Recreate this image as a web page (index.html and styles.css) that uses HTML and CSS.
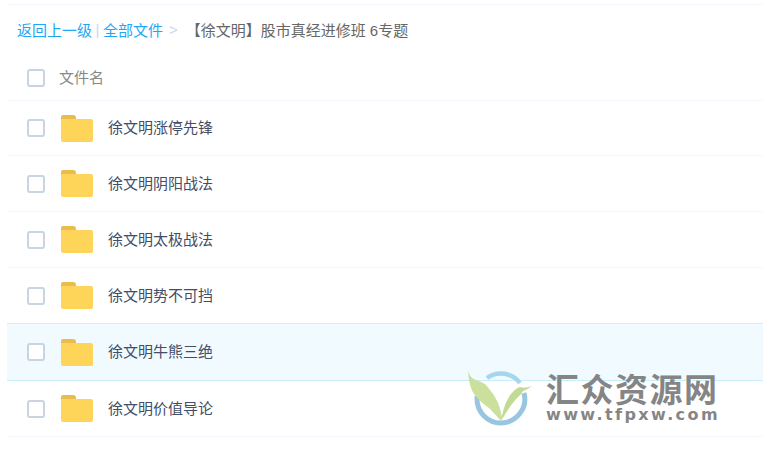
FILE: index.html
```html
<!DOCTYPE html>
<html lang="zh-CN">
<head>
    <meta charset="UTF-8">
    <title>全部文件</title>
    <link rel="stylesheet" href="styles.css">
</head>
<body>
    <div class="container">
        <div class="crumbs">
            <a class="crumb-link">返回上一级</a>
            <span class="crumb-bar">|</span>
            <a class="crumb-link">全部文件</a>
            <span class="crumb-arrow">&gt;</span>
            <span class="crumb-current">【徐文明】股市真经进修班 6专题</span>
        </div>

        <div class="list-head">
            <span class="check"></span>
            <span class="head-name">文件名</span>
        </div>

        <div class="file-row">
            <span class="check"></span>
            <svg class="folder" viewBox="0 0 32 27"><path class="folder-tab" d="M0 2a2 2 0 0 1 2-2h10a3 3 0 0 1 3 3v3H0z"/><path class="folder-body" d="M0 4h30a2 2 0 0 1 2 2v19a2 2 0 0 1-2 2H2a2 2 0 0 1-2-2z"/></svg>
            <span class="file-name">徐文明涨停先锋</span>
        </div>
        <div class="file-row">
            <span class="check"></span>
            <svg class="folder" viewBox="0 0 32 27"><path class="folder-tab" d="M0 2a2 2 0 0 1 2-2h10a3 3 0 0 1 3 3v3H0z"/><path class="folder-body" d="M0 4h30a2 2 0 0 1 2 2v19a2 2 0 0 1-2 2H2a2 2 0 0 1-2-2z"/></svg>
            <span class="file-name">徐文明阴阳战法</span>
        </div>
        <div class="file-row">
            <span class="check"></span>
            <svg class="folder" viewBox="0 0 32 27"><path class="folder-tab" d="M0 2a2 2 0 0 1 2-2h10a3 3 0 0 1 3 3v3H0z"/><path class="folder-body" d="M0 4h30a2 2 0 0 1 2 2v19a2 2 0 0 1-2 2H2a2 2 0 0 1-2-2z"/></svg>
            <span class="file-name">徐文明太极战法</span>
        </div>
        <div class="file-row">
            <span class="check"></span>
            <svg class="folder" viewBox="0 0 32 27"><path class="folder-tab" d="M0 2a2 2 0 0 1 2-2h10a3 3 0 0 1 3 3v3H0z"/><path class="folder-body" d="M0 4h30a2 2 0 0 1 2 2v19a2 2 0 0 1-2 2H2a2 2 0 0 1-2-2z"/></svg>
            <span class="file-name">徐文明势不可挡</span>
        </div>
        <div class="file-row hover">
            <span class="check"></span>
            <svg class="folder" viewBox="0 0 32 27"><path class="folder-tab" d="M0 2a2 2 0 0 1 2-2h10a3 3 0 0 1 3 3v3H0z"/><path class="folder-body" d="M0 4h30a2 2 0 0 1 2 2v19a2 2 0 0 1-2 2H2a2 2 0 0 1-2-2z"/></svg>
            <span class="file-name">徐文明牛熊三绝</span>
        </div>
        <div class="file-row">
            <span class="check"></span>
            <svg class="folder" viewBox="0 0 32 27"><path class="folder-tab" d="M0 2a2 2 0 0 1 2-2h10a3 3 0 0 1 3 3v3H0z"/><path class="folder-body" d="M0 4h30a2 2 0 0 1 2 2v19a2 2 0 0 1-2 2H2a2 2 0 0 1-2-2z"/></svg>
            <span class="file-name">徐文明价值导论</span>
        </div>
    </div>

    <!-- watermark over the list -->
    <div class="watermark">
        <svg class="wm-logo" viewBox="0 0 66 56">
            <path d="M20 7a24 24 0 0 1 33 5" fill="none" stroke="#a3d5ea" stroke-width="4.5"/>
            <path d="M57 22a24 24 0 0 1-23 30a24 24 0 0 1-24-24q0-2 0-3" fill="none" stroke="#93c4df" stroke-width="5"/>
            <path d="M1 0q2 7 8 9q9 2 14 10q9 10 12 27q-1 2-1 4q-5-6-12-13q-10-7-15-14q-5-7-6-23z" fill="#c9df97"/>
            <path d="M34 50q1-6 2-9q2-10 8-18q5-6 9-7q5 2 12-1q-5 4-9 5q-1 3-5 6q-3 3-6 7q-5 7-11 17z" fill="#bfda8d"/>
        </svg>
        <div class="wm-text">
            <div class="wm-title">汇众资源网</div>
            <div class="wm-url">www.tfpxw.com</div>
        </div>
    </div>
</body>
</html>
```

FILE: styles.css
```css
html, body {
    margin: 0;
    padding: 0;
    background-color: white;
}
body {
    font-family: "Liberation Sans", "Noto Sans CJK SC", sans-serif;
    font-size: 15px;
    color: #424e67;
    height: 469px;
    overflow: hidden;
    position: relative;
}
.container {
    margin: 4px 0 0 7px;
    border-top: 1px solid #f2f6fd;
}
.crumbs {
    display: flex;
    align-items: center;
    height: 48px;
    padding: 0 0 2px 10px;
}
.crumb-link {
    color: #1ea7f5;
}
.crumb-bar {
    color: #c4d8f4;
    margin: 0 3.5px;
}
.crumb-arrow {
    color: #c4d8f4;
    margin: 0 8px 0 6px;
}
.crumb-current {
    color: #666;
}
.list-head {
    display: flex;
    align-items: center;
    height: 43px;
    padding: 0 0 2px 20px;
    border-bottom: 1px solid #f2f6fd;
}
.list-head .check {
    margin-top: 2px;
}
.head-name {
    color: #888;
    margin-left: 14px;
}
.check {
    box-sizing: border-box;
    width: 18px;
    height: 18px;
    flex: none;
    background-color: white;
    border: 2px solid #c9d3e2;
    border-radius: 3px;
}
.file-row {
    display: flex;
    align-items: center;
    height: 55px;
    padding-left: 20px;
    border-bottom: 1px solid #f2f6fd;
}
.list-head + .file-row {
    height: 54px;
}
.file-row.hover {
    height: 56px;
    margin-top: -1px;
    background-color: #f1faff;
    border-top: 1px solid #d0eefb;
    border-bottom: 1px solid #c8eefd;
}
.folder {
    width: 32px;
    height: 27px;
    flex: none;
    margin-left: 16px;
}
.folder-tab {
    fill: #e8bd4e;
}
.folder-body {
    fill: #ffd559;
}
.file-name {
    margin: -3px 0 0 15px;
}
.watermark {
    position: absolute;
    left: 467px;
    top: 371px;
    display: flex;
    opacity: 0.95;
}
.wm-logo {
    width: 66px;
    height: 56px;
    flex: none;
}
.wm-text {
    margin-left: 13px;
    color: #7f7f7f;
    font-weight: bold;
}
.wm-title {
    font-family: "Noto Sans CJK SC", sans-serif;
    font-size: 33px;
    line-height: 34px;
    letter-spacing: 1.5px;
    white-space: nowrap;
}
.wm-url {
    font-family: "DejaVu Sans", sans-serif;
    font-size: 16px;
    line-height: 20px;
    letter-spacing: 2.4px;
    white-space: nowrap;
}
```
